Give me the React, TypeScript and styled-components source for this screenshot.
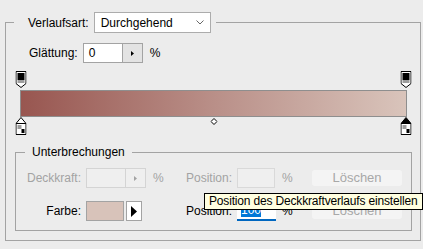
import React from "react";
import styled, { createGlobalStyle } from "styled-components";

const GlobalStyle = createGlobalStyle`
	html, body {
		margin: 0;
		background: #ececec;
	}
	body {
		font-family: "Liberation Sans", Arial, sans-serif;
		font-size: 12px;
		color: #000;
	}
`;

const Page = styled.div`
	position: relative;
	width: 423px;
	height: 249px;
	padding: 12px 0 0 5px;
	box-sizing: border-box;
	overflow: hidden;
`;

const GroupBox = styled.fieldset<{ $width: number }>`
	width: ${(p) => p.$width}px;
	box-sizing: border-box;
	margin: 0;
	border: 1px solid #a3a3a3;
	min-inline-size: 0;
`;

const OuterGroup = styled(GroupBox)`
	padding: 0 8px 9px 8px;
`;

const InnerGroup = styled(GroupBox)`
	margin: 9px 0 0 1px;
	padding: 0 0 9px 9px;
`;

const HeaderLegend = styled.legend`
	display: flex;
	align-items: center;
	gap: 5px;
	padding: 0 5px 0 14px;
	height: 21px;
`;

const PlainLegend = styled.legend`
	padding: 0 7px;
	height: 16px;
	line-height: 16px;
`;

const Select = styled.div`
	display: flex;
	align-items: center;
	justify-content: space-between;
	width: 117px;
	height: 21px;
	box-sizing: border-box;
	padding: 0 6px 0 6px;
	background: #fff;
	border: 1px solid #acacac;
`;

const Row = styled.div`
	display: flex;
	align-items: center;
	gap: 5px;
	margin: 10px 0 0 15px;
	height: 20px;
`;

const SpinField = styled.div<{ $disabled?: boolean }>`
	display: flex;
	width: 60px;
	height: 20px;
	box-sizing: border-box;
	border: 1px solid ${(p) => (p.$disabled ? "#d4d4d4" : "#a3a3a3")};
	background: ${(p) => (p.$disabled ? "#efefef" : "#fff")};
`;

const SpinValue = styled.div`
	flex: 1;
	padding-left: 5px;
	line-height: 18px;
`;

const SpinButton = styled.div<{ $disabled?: boolean }>`
	width: 19px;
	display: flex;
	align-items: center;
	justify-content: center;
	border-left: 1px solid ${(p) => (p.$disabled ? "#d4d4d4" : "#a3a3a3")};
	background: ${(p) => (p.$disabled ? "#efefef" : "#e3e3e3")};
`;

const Unit = styled.span<{ $disabled?: boolean }>`
	margin-left: 2px;
	color: ${(p) => (p.$disabled ? "#a3a3a3" : "#000")};
`;

const Editor = styled.div`
	position: relative;
	width: 387px;
	margin: 8px 0 0 6px;
`;

const StopLane = styled.div<{ $height: number }>`
	position: relative;
	height: ${(p) => p.$height}px;
	margin: 0 1px;
`;

const Bar = styled.div`
	height: 27px;
	box-sizing: border-box;
	border: 1px solid #8e8e8e;
	background: linear-gradient(to right, #985650, #b98f88 50%, #d9c4bb);
`;

const Marker = styled.div<{ $top: number }>`
	position: absolute;
	top: ${(p) => p.$top}px;
	transform: translateX(-50%);
	line-height: 0;
`;

const StopGrid = styled.div`
	display: grid;
	grid-template-columns: 56px 60px 24px 52px 38px 27px 90px;
	grid-auto-rows: 20px;
	column-gap: 5px;
	row-gap: 13px;
	align-items: center;
	margin-top: 8px;
`;

const Label = styled.span<{ $disabled?: boolean }>`
	justify-self: end;
	white-space: nowrap;
	color: ${(p) => (p.$disabled ? "#a3a3a3" : "#000")};
`;

const SmallField = styled.div`
	width: 38px;
	height: 20px;
	box-sizing: border-box;
	border: 1px solid #d9d9d9;
	background: #efefef;
`;

const FocusField = styled.div`
	width: 39px;
	height: 20px;
	box-sizing: border-box;
	background: #fff;
	border-bottom: 2px solid #0067c0;
	padding: 2px 0 0 4px;
	line-height: 14px;
`;

const Selection = styled.span`
	background: #0078d7;
	color: #fff;
`;

const ColorPick = styled.div`
	display: flex;
	gap: 2px;
`;

const Swatch = styled.div`
	width: 38px;
	height: 20px;
	box-sizing: border-box;
	border: 1px solid #a3a3a3;
	background: #d8c3ba;
`;

const ArrowButton = styled.div`
	width: 16px;
	height: 20px;
	box-sizing: border-box;
	border: 1px solid #a3a3a3;
	background: #fff;
	display: flex;
	align-items: center;
	justify-content: center;
`;

const DeleteButton = styled.div`
	height: 16px;
	line-height: 16px;
	border-radius: 3px;
	background: #f4f4f4;
	color: #a8a8a8;
	text-align: center;
	font-size: 13px;
`;

const Tooltip = styled.div`
	position: absolute;
	left: 204px;
	top: 193px;
	width: 219px;
	height: 17px;
	box-sizing: border-box;
	padding-left: 4px;
	line-height: 15px;
	letter-spacing: -0.17px;
	background: #ffffe1;
	border: 1px solid #000;
	white-space: nowrap;
`;

const RightTri = ({ color = "#000" }: { color?: string }) => (
	<svg width="3" height="5" viewBox="0 0 3 5">
		<path d="M0 0L3 2.5L0 5Z" fill={color} />
	</svg>
);

const OpacityStop = () => (
	<svg width="11" height="17" viewBox="0 0 11 17">
		<path d="M0.5 0.5H10.5V12.5L5.5 16.5L0.5 12.5Z" fill="#fff" stroke="#000" />
		<rect x="2" y="2" width="7" height="7" fill="#000" />
		<rect x="2" y="9" width="7" height="3" fill="#9d9d9d" />
	</svg>
);

const ColorStop = ({ selected }: { selected?: boolean }) => (
	<svg width="11" height="18" viewBox="0 0 11 18">
		<path d="M5.5 0.5L10.5 6.5V17.5H0.5V6.5Z" fill="#fff" stroke="#000" />
		{selected && <path d="M5.5 0.5L10.5 6.5H0.5Z" fill="#000" />}
		<path d="M0.5 6.5H10.5" stroke="#000" />
		<rect x="2" y="8" width="4" height="4" fill="#9d9d9d" />
		<rect x="6" y="12" width="3" height="4" fill="#000" />
	</svg>
);

const Midpoint = () => (
	<svg width="7" height="7" viewBox="0 0 7 7">
		<path d="M3.5 0.5L6.5 3.5L3.5 6.5L0.5 3.5Z" fill="#fff" stroke="#000" />
	</svg>
);

const App = () => {
	return (
		<Page>
			<GlobalStyle />
			<OuterGroup $width={416}>
				<HeaderLegend>
					<span>Verlaufsart:</span>
					<Select>
						<span>Durchgehend</span>
						<svg width="8" height="5" viewBox="0 0 8 5">
							<path d="M0.5 0.5L4 4L7.5 0.5" fill="none" stroke="#666" />
						</svg>
					</Select>
				</HeaderLegend>
				<Row>
					<span>Glättung:</span>
					<SpinField>
						<SpinValue>0</SpinValue>
						<SpinButton>
							<RightTri />
						</SpinButton>
					</SpinField>
					<Unit>%</Unit>
				</Row>
				<Editor>
					<StopLane $height={19}>
						<Marker $top={0} style={{ left: "0%" }}>
							<OpacityStop />
						</Marker>
						<Marker $top={0} style={{ left: "100%" }}>
							<OpacityStop />
						</Marker>
					</StopLane>
					<Bar />
					<StopLane $height={18}>
						<Marker $top={0} style={{ left: "0%" }}>
							<ColorStop />
						</Marker>
						<Marker $top={1} style={{ left: "50%" }}>
							<Midpoint />
						</Marker>
						<Marker $top={0} style={{ left: "100%" }}>
							<ColorStop selected />
						</Marker>
					</StopLane>
				</Editor>
				<InnerGroup $width={397}>
					<PlainLegend>Unterbrechungen</PlainLegend>
					<StopGrid>
						<Label $disabled>Deckkraft:</Label>
						<SpinField $disabled>
							<SpinValue />
							<SpinButton $disabled>
								<RightTri color="#a3a3a3" />
							</SpinButton>
						</SpinField>
						<Unit $disabled>%</Unit>
						<Label $disabled>Position:</Label>
						<SmallField />
						<Unit $disabled>%</Unit>
						<DeleteButton>Löschen</DeleteButton>

						<Label>Farbe:</Label>
						<ColorPick>
							<Swatch />
							<ArrowButton>
								<svg width="6" height="11" viewBox="0 0 6 11">
									<path d="M0 0L6 5.5L0 11Z" fill="#000" />
								</svg>
							</ArrowButton>
						</ColorPick>
						<span />
						<Label>Position:</Label>
						<FocusField>
							<Selection>100</Selection>
						</FocusField>
						<Unit>%</Unit>
						<DeleteButton>Löschen</DeleteButton>
					</StopGrid>
				</InnerGroup>
			</OuterGroup>
			<Tooltip>Position des Deckkraftverlaufs einstellen</Tooltip>
		</Page>
	);
};

export default App;
